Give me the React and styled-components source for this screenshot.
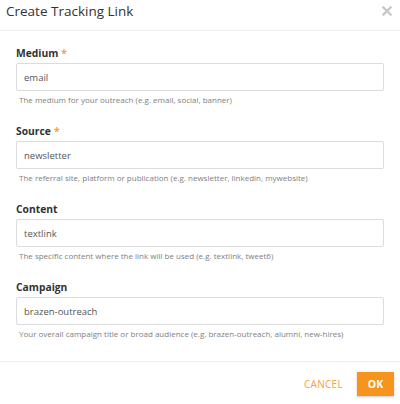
import React from "react";
import styled, { createGlobalStyle } from "styled-components";

const Global = createGlobalStyle`
  html, body { margin: 0; padding: 0; background: #fff; }
  body { font-family: "Open Sans", "Noto Sans", sans-serif; -webkit-font-smoothing: antialiased; }
  * { box-sizing: border-box; }
`;

const Dialog = styled.div`
  width: 400px;
  height: 404px;
  background: #fff;
  display: flex;
  flex-direction: column;
`;

const Header = styled.div`
  height: 31px;
  flex: none;
  display: flex;
  align-items: center;
  justify-content: space-between;
  padding: 0 8px 9px 6px;
  border-bottom: 1px solid #ececec;
`;

const Title = styled.h1`
  margin: 0;
  font-size: 13.5px;
  line-height: 18px;
  font-weight: 400;
  color: #333;
`;

const CloseButton = styled.button`
  border: 0;
  background: none;
  padding: 0;
  width: 10px;
  height: 10px;
  display: flex;
  cursor: pointer;
`;

const Body = styled.div`
  flex: 1;
  padding: 14px 16px 0 16px;
`;

const Field = styled.div`
  margin-bottom: 16px;
`;

const Label = styled.label`
  display: block;
  font-size: 10.3px;
  line-height: 16px;
  font-weight: 700;
  color: #333;
  margin-bottom: 2px;
`;

const Star = styled.span`
  color: #f7a23b;
  margin-left: 3px;
`;

const Input = styled.input`
  display: block;
  width: 100%;
  height: 28px;
  border: 1px solid #dcdcdc;
  border-radius: 2px;
  padding: 0 7px;
  font-family: inherit;
  font-size: 9.5px;
  color: #555;
  outline: none;
  background: #fff;
`;

const Help = styled.div`
  margin-top: 2px;
  padding-left: 3px;
  font-size: 8px;
  line-height: 14px;
  color: #808080;
`;

const Footer = styled.div`
  flex: none;
  border-top: 1px solid #ececec;
  padding: 10px 6px 8px 0;
  display: flex;
  justify-content: flex-end;
  align-items: center;
  gap: 14px;
`;

const TextButton = styled.button`
  border: 0;
  background: none;
  font-family: inherit;
  font-size: 10px;
  color: #f5a04a;
  letter-spacing: 0.3px;
  padding: 0;
  cursor: pointer;
`;

const PrimaryButton = styled.button`
  border: 0;
  background: #f7941d;
  color: #fff;
  font-family: inherit;
  font-weight: 700;
  font-size: 10.5px;
  width: 37px;
  height: 24px;
  padding: 0;
  box-shadow: 0 1px 2px rgba(0,0,0,0.22);
  cursor: pointer;
`;

const fields = [
  { label: "Medium", required: true, value: "email", help: "The medium for your outreach (e.g. email, social, banner)" },
  { label: "Source", required: true, value: "newsletter", help: "The referral site, platform or publication (e.g. newsletter, linkedin, mywebsite)" },
  { label: "Content", required: false, value: "textlink", help: "The specific content where the link will be used (e.g. textlink, tweet6)" },
  { label: "Campaign", required: false, value: "brazen-outreach", help: "Your overall campaign title or broad audience (e.g. brazen-outreach, alumni, new-hires)" },
];

export default function App() {
  return (
    <Dialog>
      <Global />
      <Header>
        <Title>Create Tracking Link</Title>
        <CloseButton aria-label="Close">
          <svg width="10" height="10" viewBox="0 0 10 10">
            <path d="M1.5 1.5 L8.5 8.5 M8.5 1.5 L1.5 8.5" stroke="#c8c8c8" strokeWidth="2.4" strokeLinecap="square" />
          </svg>
        </CloseButton>
      </Header>
      <Body>
        {fields.map((f) => (
          <Field key={f.label}>
            <Label>
              {f.label}
              {f.required && <Star>*</Star>}
            </Label>
            <Input defaultValue={f.value} />
            <Help>{f.help}</Help>
          </Field>
        ))}
      </Body>
      <Footer>
        <TextButton>CANCEL</TextButton>
        <PrimaryButton>OK</PrimaryButton>
      </Footer>
    </Dialog>
  );
}
